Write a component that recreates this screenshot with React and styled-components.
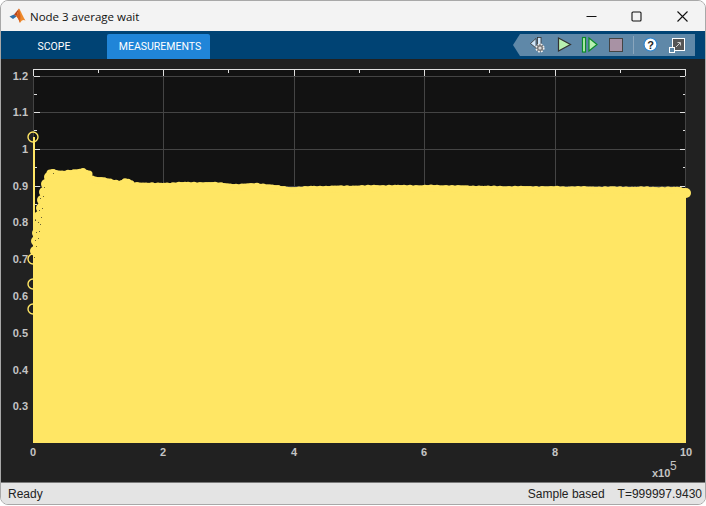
import React from "react";
import styled, { createGlobalStyle } from "styled-components";

const Global = createGlobalStyle`
  html, body { margin: 0; padding: 0; background: #ffffff; }
  #root { width: 706px; height: 506px; overflow: hidden; }
`;

const Window = styled.div`
  width: 706px;
  height: 505px;
  box-sizing: border-box;
  border: 1px solid #a8a8a8;
  border-radius: 8px;
  overflow: hidden;
  display: flex;
  flex-direction: column;
  background: #f3f3f3;
`;

const TitleBar = styled.div`
  height: 30px;
  flex: none;
  display: flex;
  align-items: center;
  padding-left: 8px;
  background: #f3f3f3;
`;

const Title = styled.div`
  margin-left: 4px;
  font: 11.5px "Open Sans", sans-serif;
  color: #111;
  flex: 1;
`;

const Controls = styled.div`
  display: flex;
  align-items: center;
  height: 100%;
`;

const ControlBtn = styled.div`
  width: 45.5px;
  height: 30px;
  display: flex;
  align-items: center;
  justify-content: center;
  color: #111;
`;

const Toolbar = styled.div`
  height: 28px;
  flex: none;
  display: flex;
  align-items: flex-end;
  justify-content: space-between;
  background: #004374;
  padding-left: 7px;
`;

const Tabs = styled.div`
  display: flex;
  gap: 7px;
`;

const Tab = styled.div`
  width: ${(p) => (p.$active ? "103px" : "92px")};
  height: 25px;
  box-sizing: border-box;
  padding-left: ${(p) => (p.$active ? "3px" : "0")};
  display: flex;
  align-items: center;
  justify-content: center;
  font: 10.5px Roboto, sans-serif;
  color: #fff;
  background: ${(p) => (p.$active ? "#2085d8" : "transparent")};
  border-radius: 2px 2px 0 0;
`;

const Tools = styled.div`
  align-self: flex-end;
  margin: 0 10px 3px 0;
  width: 182px;
  height: 22px;
  background: #5f88a8;
  clip-path: polygon(7px 0, 100% 0, 100% 100%, 7px 100%, 0 50%);
`;

const Plot = styled.div`
  flex: 1;
  min-height: 0;
  background: #212121;
`;

const Chart = styled.svg`
  display: block;
`;

const TickLabel = styled.text`
  font: bold 11px "Liberation Sans", sans-serif;
  fill: #c4c4c4;
`;

const Exponent = styled(TickLabel)`
  font-size: 12px;
  font-weight: normal;
`;

const StatusBar = styled.div`
  height: 21px;
  flex: none;
  border-top: 1px solid #7a7a7a;
  background: #e4e4e4;
  display: flex;
  align-items: center;
  justify-content: space-between;
  padding: 0 3px 0 7px;
  font: 12px "Liberation Sans", sans-serif;
  color: #222;
`;

const StatusRight = styled.div`
  display: flex;
  gap: 13px;
`;

const MatlabLogo = () => (
  <svg width="17" height="16" viewBox="0 0 17 16">
    <path d="M0.5 8.5 L5 6.5 L7.5 8.5 L4 11 Z" fill="#2f6fa8" />
    <path d="M5 6.5 L10 0.5 L7.5 8.5 Z" fill="#b8461c" />
    <path d="M10 0.5 C12 3 14 9 16.5 12.5 C14 11 12.5 12.5 11 15 C10 12 9 10 7.5 8.5 Z" fill="#ee8a2c" />
    <path d="M10 0.5 L11.5 8 L11 15 C10 12 9 10 7.5 8.5 Z" fill="#d4601f" />
  </svg>
);

const ParamsIcon = () => (
  <g>
    <path d="M0.5 6.5 L6 1.5 V11 Z" fill="#cfe6fa" stroke="#333" strokeWidth="0.8" />
    <rect x="7.5" y="0.5" width="3.5" height="7" fill="#cfe6fa" stroke="#333" strokeWidth="0.8" />
    <circle cx="10" cy="11" r="3.8" fill="#777" stroke="#eee" strokeWidth="1.6" strokeDasharray="1.8 1.2" />
    <circle cx="10" cy="11" r="1.6" fill="#ddd" />
  </g>
);

const yTicks = [
  ["1.2", 76], ["1.1", 112], ["1", 149], ["0.9", 186], ["0.8", 222],
  ["0.7", 259], ["0.6", 296], ["0.5", 333], ["0.4", 370], ["0.3", 406],
];
const xTicks = [["0", 33], ["2", 163], ["4", 294], ["6", 424], ["8", 555], ["10", 685]];

// top of the yellow band, read off the picture: [x, top y]
const trace = [
  [33, 262], [35, 227], [39, 200], [43, 185], [47, 172], [50, 169], [62, 171], [70, 170],
  [83, 168], [89, 171], [93, 177], [103, 177], [112, 179], [120, 181], [124, 179], [127, 178],
  [133, 182], [157, 183], [180, 182], [213, 182], [237, 184], [257, 183], [275, 185],
  [290, 187], [313, 186], [380, 185], [440, 185], [500, 186], [600, 186.5], [686, 187],
];

const topAt = (x) => {
  for (let i = 1; i < trace.length; i++) {
    if (x <= trace[i][0]) {
      const [x0, y0] = trace[i - 1];
      const [x1, y1] = trace[i];
      return y0 + ((y1 - y0) * (x - x0)) / (x1 - x0);
    }
  }
  return 187;
};

// samples along the top so the edge has the lumpy look of overlapping markers
const blobs = [];
for (let x = 50; x < 682; x += 3) {
  const wobble = Math.sin(x * 0.9) * 0.3 + Math.sin(x * 2.3) * 0.2;
  blobs.push([x, topAt(x) + 3.5 + wobble]);
}

// the first samples, larger and spread out up the left side
const leftBlobs = [
  [35, 251], [36, 241], [37, 233], [38, 225], [39, 216], [41, 208],
  [42, 200], [44, 192], [46, 184], [49, 177], [53, 174],
];

const specks = [
  [44, 187], [43, 196], [40, 198], [42, 208], [39, 210], [41, 217], [38, 222], [40, 224],
  [39, 231], [36, 232], [38, 238], [35, 240], [36, 246], [34, 257], [53, 173],
];

const markers = [[33, 137], [33, 259], [33, 284], [33, 309]];

const edgePath =
  "M33 443 " + trace.map(([x, y]) => `L${x} ${y + 1}`).join(" ") + " L686 443 Z";

const PlotChart = () => (
  <Chart width="704" height="422" viewBox="1 59 704 422">
    <rect x="33.5" y="69.5" width="652" height="373" fill="#121212" stroke="#e0e0e0" />
    {yTicks.map(([t, y]) => (
      <g key={t}>
        <line x1="34" x2="686" y1={y + 0.5} y2={y + 0.5} stroke="#444" />
        <line x1="34" x2="40" y1={y + 0.5} y2={y + 0.5} stroke="#e0e0e0" />
        <line x1="680" x2="686" y1={y + 0.5} y2={y + 0.5} stroke="#e0e0e0" />
        <line x1="34" x2="37" y1={y + 18.5} y2={y + 18.5} stroke="#e0e0e0" />
        <line x1="683" x2="686" y1={y + 18.5} y2={y + 18.5} stroke="#e0e0e0" />
        <TickLabel x="28" y={y + 4} textAnchor="end">{t}</TickLabel>
      </g>
    ))}
    {xTicks.map(([t, x]) => (
      <g key={t}>
        <line x1={x + 0.5} x2={x + 0.5} y1="70" y2="443" stroke="#444" />
        <line x1={x + 0.5} x2={x + 0.5} y1="70" y2="76" stroke="#e0e0e0" />
        <line x1={x + 65.5} x2={x + 65.5} y1="70" y2="73" stroke={x < 685 ? "#e0e0e0" : "none"} />
        <TickLabel x={t === "10" ? 686 : x} y="456" textAnchor="middle">{t}</TickLabel>
      </g>
    ))}
    <line x1="34" x2="34" y1="137" y2="300" stroke="#ffe664" strokeWidth="2" />
    <path d={edgePath} fill="#ffe664" />
    {blobs.map(([x, y]) => (
      <circle key={x} cx={x} cy={y} r="3.5" fill="#ffe664" />
    ))}
    {leftBlobs.map(([x, y]) => (
      <circle key={y} cx={x} cy={y} r="5" fill="#ffe664" />
    ))}
    <rect x="675" y="188" width="11" height="10" fill="#ffe664" />
    <circle cx="686" cy="193" r="5" fill="#ffe664" />
    {specks.map(([x, y]) => (
      <rect key={`${x}-${y}`} x={x} y={y} width="1" height="1" fill="#6b6130" />
    ))}
    {markers.map(([x, y]) => (
      <circle key={y} cx={x} cy={y} r="5" fill="none" stroke="#ffe664" strokeWidth="1.4" />
    ))}
    <TickLabel x="652" y="477">x10</TickLabel>
    <Exponent x="670" y="470">5</Exponent>
  </Chart>
);

const ToolIcons = () => (
  <svg width="182" height="22" viewBox="0 0 182 22" style={{ display: "block" }}>
    <g transform="translate(17 3)"><ParamsIcon /></g>
    <path d="M45.5 4 L57.5 10.5 L45.5 17 Z" fill="#b8f0b0" stroke="#333" strokeWidth="1.2" />
    <rect x="69.5" y="3.5" width="3" height="14.5" fill="#b8f0b0" stroke="#0a8a2a" strokeWidth="1.2" />
    <path d="M76 4 L84 10.5 L76 17 Z" fill="#b8f0b0" stroke="#0a8a2a" strokeWidth="1.2" />
    <rect x="96.5" y="4.5" width="13" height="13" fill="#a892a4" stroke="#444" />
    <line x1="120.5" y1="2" x2="120.5" y2="20" stroke="#8aa6bd" />
    <circle cx="137.5" cy="10.5" r="6.5" fill="#fff" stroke="#2f86d0" strokeWidth="1.2" />
    <text x="137.5" y="14.5" textAnchor="middle" fontFamily="Liberation Sans" fontWeight="bold" fontSize="11" fill="#222">?</text>
    <rect x="159.5" y="4.5" width="12" height="12" fill="#555" stroke="#fff" />
    <path d="M163 13 L167 9 M164.5 8.5 H167.5 V11.5" fill="none" stroke="#ccc" />
    <rect x="156.5" y="13.5" width="5" height="5" fill="#5f88a8" stroke="#fff" />
  </svg>
);

export default function App() {
  return (
    <>
      <Global />
      <Window>
        <TitleBar>
          <MatlabLogo />
          <Title>Node 3 average wait</Title>
          <Controls>
            <ControlBtn>
              <svg width="11" height="11" viewBox="0 0 11 11"><path d="M0.5 5.5 H10.5" stroke="#111" strokeWidth="1.1" /></svg>
            </ControlBtn>
            <ControlBtn>
              <svg width="11" height="11" viewBox="0 0 11 11"><rect x="1" y="1" width="9" height="9" rx="1" fill="none" stroke="#111" strokeWidth="1.1" /></svg>
            </ControlBtn>
            <ControlBtn>
              <svg width="11" height="11" viewBox="0 0 11 11"><path d="M0.5 0.5 L10.5 10.5 M10.5 0.5 L0.5 10.5" stroke="#111" strokeWidth="1.1" /></svg>
            </ControlBtn>
          </Controls>
        </TitleBar>
        <Toolbar>
          <Tabs>
            <Tab>SCOPE</Tab>
            <Tab $active>MEASUREMENTS</Tab>
          </Tabs>
          <Tools><ToolIcons /></Tools>
        </Toolbar>
        <Plot><PlotChart /></Plot>
        <StatusBar>
          <span>Ready</span>
          <StatusRight>
            <span>Sample based</span>
            <span>T=999997.9430</span>
          </StatusRight>
        </StatusBar>
      </Window>
    </>
  );
}
